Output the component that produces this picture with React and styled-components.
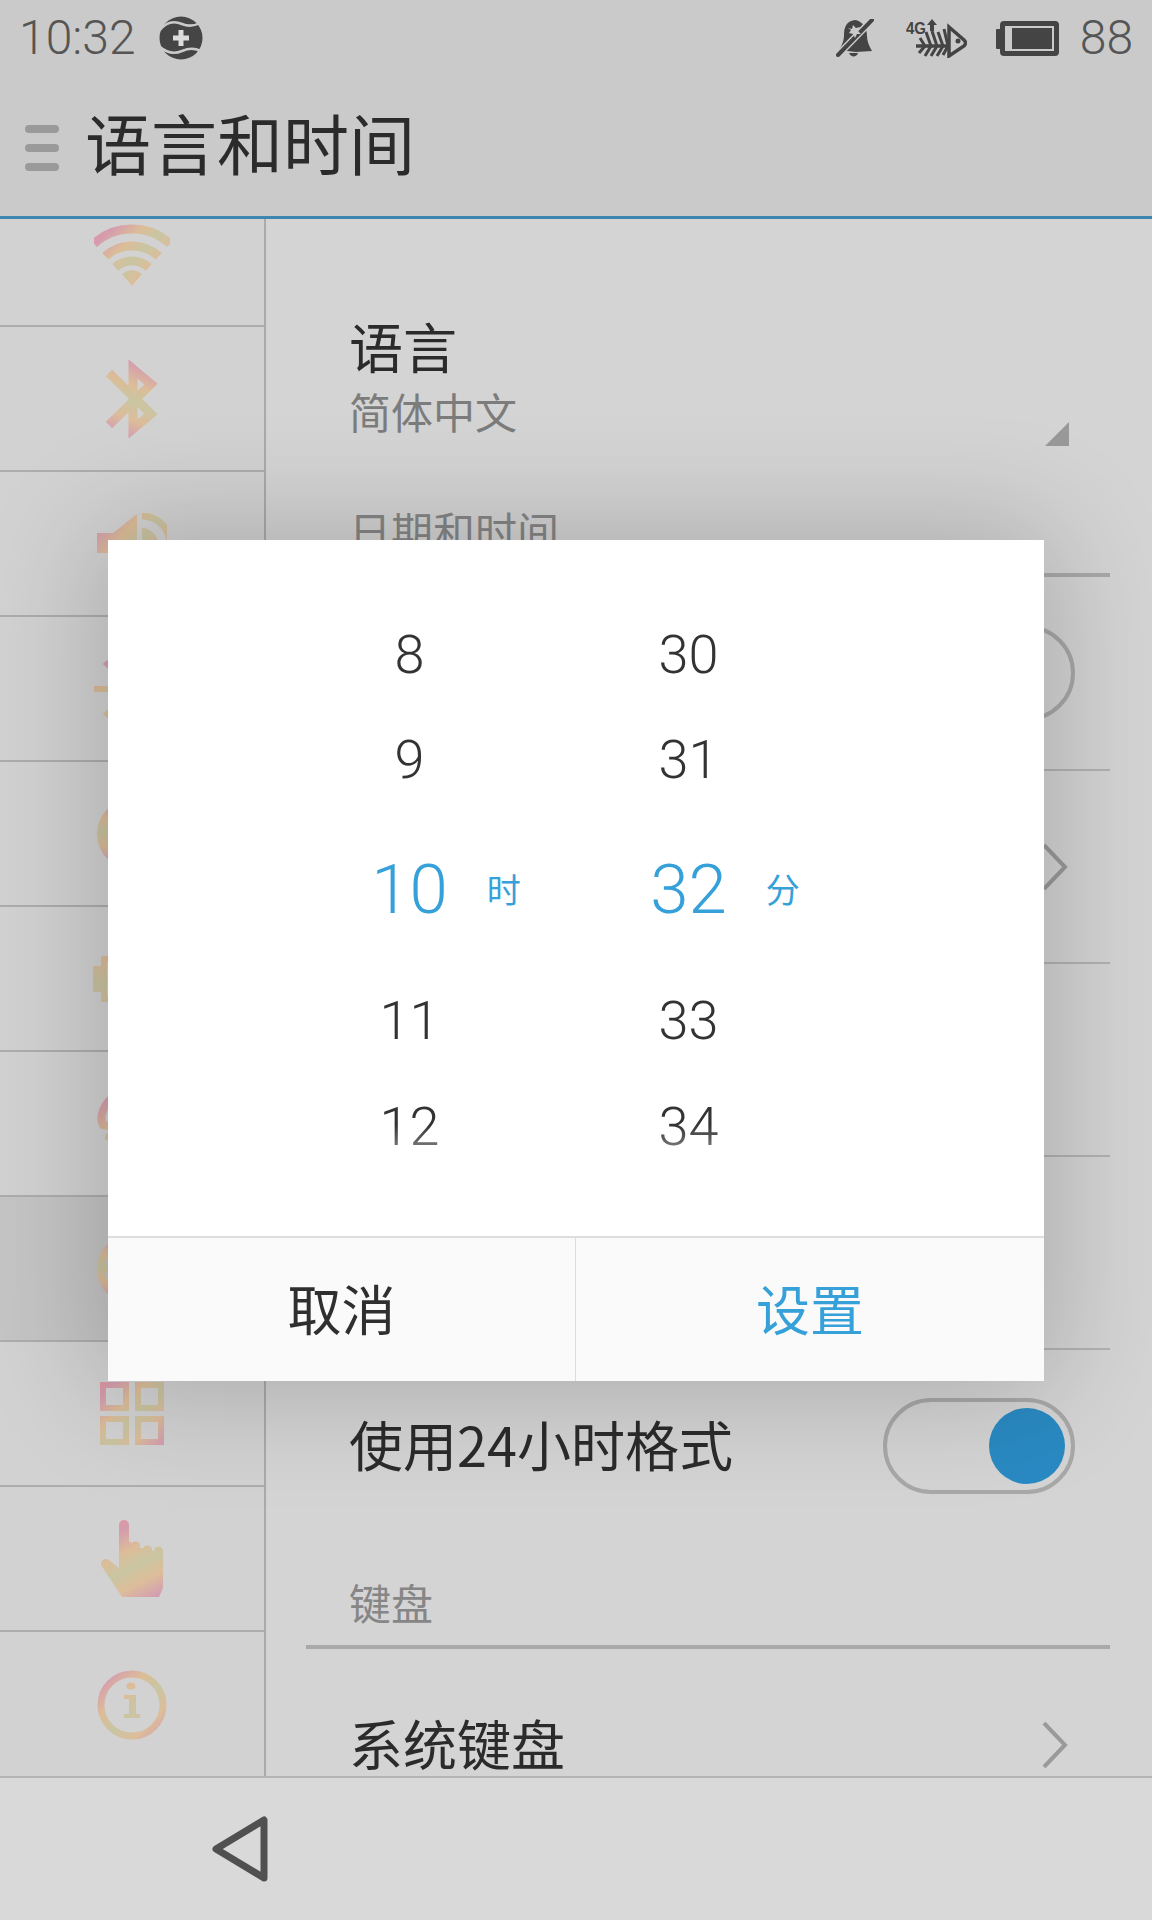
import React from "react";
import styled, { createGlobalStyle } from "styled-components";

const CJK = `"Noto Sans CJK SC", "Noto Sans", sans-serif`;
const NUM = `Roboto, "Noto Sans CJK SC", sans-serif`;

const Global = createGlobalStyle`
  html, body { margin: 0; padding: 0; background: #d4d4d4; }
  * { box-sizing: border-box; }
`;

const Screen = styled.div`
  position: relative;
  width: 1152px;
  height: 1920px;
  overflow: hidden;
  display: flex;
  flex-direction: column;
  font-family: ${CJK};
  background: #d4d4d4;
`;

const StatusBar = styled.div`
  height: 80px;
  flex: none;
  background: #cacaca;
  display: flex;
  align-items: center;
  justify-content: space-between;
  padding: 0 19px 4px 19px;
`;
const StatusGroup = styled.div`
  display: flex;
  align-items: center;
`;
const StatusText = styled.span`
  font: 300 48px/1 ${NUM};
  color: #555;
  margin: ${(p) => p.$margin || 0};
`;
const StatusGlyph = styled.svg`
  flex: none;
  display: block;
  margin: ${(p) => p.$margin || 0};
`;

const Header = styled.header`
  height: 139px;
  flex: none;
  background: #cacaca;
  border-bottom: 3px solid #3c86b0;
  display: flex;
  align-items: center;
  padding-left: 25px;
  gap: 26px;
`;
const Burger = styled.div`
  width: 34px;
  display: flex;
  flex-direction: column;
  gap: 11px;
  & > i {
    display: block;
    height: 8px;
    border-radius: 4px;
    background: #9a9a9a;
  }
`;
const Title = styled.h1`
  margin: 0 0 14px;
  font: 400 66px/1 ${CJK};
  color: #2b2b2b;
`;

const Body = styled.div`
  flex: 1;
  min-height: 0;
  display: flex;
  overflow: hidden;
`;
const Sidebar = styled.aside`
  width: 266px;
  flex: none;
  background: #d2d2d2;
  border-right: 2px solid #aaa;
  display: flex;
  flex-direction: column;
`;
const SideRow = styled.div`
  flex: none;
  height: ${(p) => p.$h || 145}px;
  display: flex;
  align-items: ${(p) => (p.$top ? "flex-start" : "center")};
  justify-content: center;
  border-bottom: 2px solid #adadad;
  background: ${(p) => (p.$active ? "rgba(0,0,0,0.06)" : "transparent")};
  padding-top: ${(p) => p.$pad || 0}px;
  &:last-child { border-bottom: none; }
`;

const Main = styled.main`
  flex: 1;
  min-width: 0;
  padding: 0 42px 0 40px;
  overflow: hidden;
`;
const LangRow = styled.div`
  height: 252px;
  display: flex;
  align-items: flex-start;
  justify-content: space-between;
  padding: 100px 41px 0 43px;
`;
const LangText = styled.div`
  display: flex;
  flex-direction: column;
`;
const ItemTitle = styled.div`
  font: 400 54px/1 ${CJK};
  color: #2b2b2b;
  white-space: nowrap;
`;
const ItemSub = styled.div`
  font: 400 42px/1 ${CJK};
  color: #7c7c7c;
  margin-top: 17px;
`;
const Corner = styled.div`
  width: 24px;
  height: 24px;
  margin-top: 103px;
  background: #999;
  clip-path: polygon(100% 0, 100% 100%, 0 100%);
`;
const Section = styled.div`
  height: 106px;
  flex: none;
  border-bottom: 4px solid #a9a9a9;
  padding: 38px 0 0 43px;
  font: 400 42px/1 ${CJK};
  color: #868686;
`;
const Row = styled.div`
  height: ${(p) => p.$h || 193}px;
  display: flex;
  align-items: center;
  justify-content: flex-end;
  padding: 0 ${(p) => p.$right || 35}px ${(p) => (p.$plain ? 2 : 0)}px 43px;
  border-bottom: ${(p) => (p.$plain ? "none" : "2px solid #b2b2b2")};
`;
const RowLabel = styled(ItemTitle)`
  margin: 0 auto ${(p) => p.$lift || 0}px 0;
`;
const Toggle = styled.div`
  width: 192px;
  height: 96px;
  flex: none;
  border-radius: 48px;
  border: 4px solid #a8a8a8;
  display: flex;
  align-items: center;
  justify-content: ${(p) => (p.$on ? "flex-end" : "flex-start")};
  padding: 0 6px;
  & > i {
    width: 76px;
    height: 76px;
    border-radius: 50%;
    background: ${(p) => (p.$on ? "#2a8ac3" : "transparent")};
  }
`;
const Chevron = styled.svg`
  flex: none;
  display: block;
`;

const NavBar = styled.nav`
  height: 144px;
  flex: none;
  background: #d9d9d9;
  border-top: 2px solid #b4b4b4;
  display: flex;
  align-items: center;
  padding-left: 211px;
`;

const Dialog = styled.div`
  position: absolute;
  left: 108px;
  top: 540px;
  width: 936px;
  height: 841px;
  background: #fff;
  box-shadow: 0 0 110px 10px rgba(0, 0, 0, 0.2);
  display: flex;
  flex-direction: column;
`;
const Picker = styled.div`
  position: relative;
  height: 696px;
  flex: none;
  display: flex;
  padding: 63px 0 0 162px;
  &::before, &::after {
    content: "";
    position: absolute;
    left: 0;
    right: 0;
    pointer-events: none;
  }
  &::before {
    top: 0;
    height: 120px;
    background: linear-gradient(#fff 45%, rgba(255,255,255,0));
  }
  &::after {
    bottom: 0;
    height: 111px;
    background: linear-gradient(rgba(255,255,255,0), #fff 60%);
  }
`;
const Wheel = styled.div`
  width: 279px;
  display: flex;
  flex-direction: column;
  align-items: center;
`;
const Cell = styled.div`
  height: ${(p) => p.$h}px;
  display: flex;
  align-items: center;
  justify-content: center;
  font: 300 ${(p) => (p.$sel ? 69 : 54)}px/1 ${NUM};
  color: ${(p) => (p.$sel ? "#36a0d9" : "#333")};
`;
const Num = styled.span`
  position: relative;
`;
const Unit = styled.span`
  position: absolute;
  left: calc(100% + 39px);
  top: 50%;
  transform: translateY(-50%);
  font: 400 34px/1 ${CJK};
  color: #36a0d9;
  white-space: nowrap;
`;
const Footer = styled.div`
  flex: 1;
  display: grid;
  grid-template-columns: 467px 1fr;
  background: #fafafa;
  border-top: 2px solid #dedede;
`;
const FootBtn = styled.div`
  display: flex;
  align-items: center;
  justify-content: center;
  padding-bottom: 4px;
  font: 400 54px/1 ${CJK};
  color: ${(p) => (p.$primary ? "#36a0d9" : "#2f2f2f")};
  border-left: ${(p) => (p.$primary ? "1px solid #dcdcdc" : "none")};
`;

/* pastel fill shared by the sidebar icons */
const Pastel = ({ id, w, h, dir = [0, 0, 1, 1], children }) => (
  <svg width={w} height={h} viewBox={`0 0 ${w} ${h}`} style={{ display: "block", flex: "none" }}>
    <defs>
      <linearGradient id={id} gradientUnits="userSpaceOnUse" x1={dir[0] * w} y1={dir[1] * h} x2={dir[2] * w} y2={dir[3] * h}>
        <stop offset="0" stopColor="#dc98a0" />
        <stop offset="0.12" stopColor="#d59cae" />
        <stop offset="0.36" stopColor="#dcbd98" />
        <stop offset="0.55" stopColor="#c9c5a2" />
        <stop offset="0.75" stopColor="#ddbd9a" />
        <stop offset="1" stopColor="#d29ab4" />
      </linearGradient>
    </defs>
    <g fill={`url(#${id})`} stroke={`url(#${id})`} strokeWidth="0">{children}</g>
  </svg>
);

const band = (r, deg = 42, cx = 38, cy = 62) => {
  const a = (deg * Math.PI) / 180;
  const dx = r * Math.sin(a);
  const dy = r * Math.cos(a);
  return `M${cx - dx} ${cy - dy}A${r} ${r} 0 0 1 ${cx + dx} ${cy - dy}`;
};

const WifiIcon = () => (
  <Pastel id="g-wifi" w={76} h={62} dir={[0.1, 0, 0.9, 1]}>
    <g fill="none" strokeWidth="9">
      <path d={band(57)} />
      <path d={band(40)} />
      <path d={band(25)} />
    </g>
    <path d="M38 62L28 50A15 15 0 0 1 48 50Z" />
  </Pastel>
);
const BluetoothIcon = () => (
  <Pastel id="g-bt" w={54} h={78} dir={[0.9, 0, 0.3, 1]}>
    <path fill="none" strokeWidth="9" d="M4 13L46 54L28 69V9L46 24L4 65" />
  </Pastel>
);
const SoundIcon = () => (
  <Pastel id="g-snd" w={70} h={62}>
    <path d="M0 20H16L40 1V61L16 40H0Z" />
    <path fill="none" strokeWidth="7" d="M45 3A28 28 0 0 1 45 59" />
    <path d="M45 15A16 16 0 0 1 45 47Z" />
  </Pastel>
);
const SunIcon = () => (
  <Pastel id="g-sun" w={76} h={76} dir={[0, 0.1, 0.6, 0.9]}>
    <g fill="none" strokeWidth="6">
      <path d="M0 38H14M62 38H76M38 0V14M38 62V76M11 11L20 20M65 11L56 20M11 65L20 56M65 65L56 56" />
    </g>
    <circle cx="38" cy="38" r="16" />
  </Pastel>
);
const DiscIcon = () => (
  <Pastel id="g-disc" w={70} h={70} dir={[0.6, 0, 0.4, 1]}>
    <circle cx="35" cy="35" r="35" />
  </Pastel>
);
const BatteryIcon = () => (
  <Pastel id="g-bat" w={78} h={46} dir={[0, -1, 0, 2]}>
    <rect x="0" y="10" width="11" height="26" />
    <rect x="11" y="3" width="64" height="40" fill="none" strokeWidth="6" />
  </Pastel>
);
const SwirlIcon = () => (
  <Pastel id="g-swirl" w={70} h={70}>
    <g fill="none" strokeWidth="8" strokeLinecap="round">
      <path d="M20 5C6 14 2 28 6 36C18 38 30 40 36 32" />
      <path d="M12 48C24 54 36 52 48 46" />
      <path d="M22 64H46" />
    </g>
  </Pastel>
);
const GlobeIcon = () => (
  <Pastel id="g-globe" w={70} h={70} dir={[0.6, 0, 0.4, 1]}>
    <circle cx="35" cy="35" r="31" fill="none" strokeWidth="8" />
    <rect x="6" y="31" width="58" height="7" />
  </Pastel>
);
const GridIcon = () => (
  <Pastel id="g-grid" w={64} h={63}>
    <g fill="none" strokeWidth="6">
      <rect x="3" y="3" width="23" height="23" />
      <rect x="38" y="3" width="23" height="23" />
      <rect x="3" y="37" width="23" height="23" />
      <rect x="38" y="37" width="23" height="23" />
    </g>
  </Pastel>
);
const HandIcon = () => (
  <Pastel id="g-hand" w={62} h={77} dir={[0.3, 0, 0.95, 1]}>
    <path d="M18 5A5 5 0 0 1 28 5V22H30V24A5 5 0 0 1 39 24V28H42A5 5 0 0 1 51 28V31H53A4.5 4.5 0 0 1 62 31V68L58 77H21L2 48A4.5 4.5 0 0 1 8 40L18 48Z" />
  </Pastel>
);
const InfoIcon = () => (
  <Pastel id="g-info" w={70} h={72}>
    <circle cx="35" cy="36" r="31" fill="none" strokeWidth="7" />
    <ellipse cx="34" cy="17" rx="4.5" ry="3.5" />
    <path d="M27 26H39V45H43V49H27V45H32V30H27Z" />
  </Pastel>
);

const LogoMark = () => (
  <StatusGlyph width="44" height="44" viewBox="0 0 44 44" $margin="0 0 0 23px">
    <circle cx="22" cy="22" r="21.5" fill="#454545" />
    <path d="M1 14C8 5 16 5 23 8C30 11 36 10 43 6" fill="none" stroke="#cacaca" strokeWidth="2.5" />
    <path d="M1 31C8 37 16 38 23 35C30 32 37 32 43 36" fill="none" stroke="#cacaca" strokeWidth="2.5" />
    <circle cx="22" cy="22" r="11" fill="#454545" />
    <path d="M19.5 14H24.5V19.5H30V24.5H24.5V30H19.5V24.5H14V19.5H19.5Z" fill="#dcdcdc" />
  </StatusGlyph>
);
const BellOff = () => (
  <StatusGlyph width="38" height="38" viewBox="0 0 38 38" $margin="0 32px 0 0">
    <path d="M19 1C10 2 8 9 8 16C8 23 5 28 3 31L20 33L36 32C33 27 31 22 31 17C31 8 26 2 19 1Z" fill="#444" />
    <path d="M13 34C15 39 21 38 22 34Z" fill="#444" />
    <path d="M34 3L2 36" stroke="#cacaca" strokeWidth="7" />
    <path d="M36 1L2 36" stroke="#444" strokeWidth="4" strokeLinecap="round" />
    <path d="M12 9L16 10L17 6L20 9L24 8L22 12L25 15L21 15L19 19L17 15L13 14L15 11Z" fill="#cacaca" />
  </StatusGlyph>
);
const FishSignal = () => (
  <StatusGlyph width="61" height="40" viewBox="0 0 61 40" $margin="0 29px 0 0">
    <text x="0" y="16" fontFamily="Liberation Sans, sans-serif" fontWeight="700" fontSize="17" textLength="20" lengthAdjust="spacingAndGlyphs" fill="#444">4G</text>
    <path d="M26 1L21 7H24V13H28V7H31Z" fill="#444" />
    <path d="M10 28H42" stroke="#444" strokeWidth="3.5" />
    <path d="M20 14L25 28L19 38M26 13L31 28L25 38M32 14L37 28L31 38M38 11L42 28L37 37M14 20L19 28L13 35" fill="none" stroke="#444" strokeWidth="3" />
    <path d="M43 9L58 22Q61 25 58 28L43 38Z" fill="none" stroke="#444" strokeWidth="3.5" />
    <circle cx="52" cy="23" r="2.5" fill="#444" />
  </StatusGlyph>
);
const BatteryStatus = () => (
  <StatusGlyph width="63" height="35" viewBox="0 0 63 35" $margin="0 21px 0 0">
    <rect x="0" y="8" width="5" height="20" rx="1" fill="#444" />
    <rect x="6.5" y="2.5" width="54" height="30" rx="1.5" fill="none" stroke="#444" strokeWidth="5" />
    <rect x="16" y="7" width="40" height="21" fill="#444" />
  </StatusGlyph>
);

const ChevronIcon = () => (
  <Chevron width="26" height="46" viewBox="0 0 26 46">
    <path d="M2 1L23 23L2 45" fill="none" stroke="#9a9a9a" strokeWidth="4" />
  </Chevron>
);

const hours = [["8", 104], ["9", 106], ["10", 152, "时"], ["11", 111], ["12", 102]];
const minutes = [["30", 104], ["31", 106], ["32", 152, "分"], ["33", 111], ["34", 102]];

const Column = ({ items }) => (
  <Wheel>
    {items.map(([value, h, unit]) => (
      <Cell key={value} $h={h} $sel={!!unit}>
        <Num>
          {value}
          {unit && <Unit>{unit}</Unit>}
        </Num>
      </Cell>
    ))}
  </Wheel>
);

export default function App() {
  return (
    <Screen>
      <Global />
      <StatusBar>
        <StatusGroup>
          <StatusText>10:32</StatusText>
          <LogoMark />
        </StatusGroup>
        <StatusGroup>
          <BellOff />
          <FishSignal />
          <BatteryStatus />
          <StatusText>88</StatusText>
        </StatusGroup>
      </StatusBar>
      <Header>
        <Burger><i /><i /><i /></Burger>
        <Title>语言和时间</Title>
      </Header>
      <Body>
        <Sidebar>
          <SideRow $h={108} $top $pad={5}><WifiIcon /></SideRow>
          <SideRow><BluetoothIcon /></SideRow>
          <SideRow><SoundIcon /></SideRow>
          <SideRow><SunIcon /></SideRow>
          <SideRow><DiscIcon /></SideRow>
          <SideRow><BatteryIcon /></SideRow>
          <SideRow><SwirlIcon /></SideRow>
          <SideRow $active><GlobeIcon /></SideRow>
          <SideRow><GridIcon /></SideRow>
          <SideRow><HandIcon /></SideRow>
          <SideRow><InfoIcon /></SideRow>
        </Sidebar>
        <Main>
          <LangRow>
            <LangText>
              <ItemTitle>语言</ItemTitle>
              <ItemSub>简体中文</ItemSub>
            </LangText>
            <Corner />
          </LangRow>
          <Section>日期和时间</Section>
          <Row $h={194}><Toggle /></Row>
          <Row $right={42}><ChevronIcon /></Row>
          <Row />
          <Row />
          <Row $plain><RowLabel $lift={4}>使用24小时格式</RowLabel><Toggle $on><i /></Toggle></Row>
          <Section>键盘</Section>
          <Row $right={42}><RowLabel $lift={3}>系统键盘</RowLabel><ChevronIcon /></Row>
        </Main>
      </Body>
      <NavBar>
        <svg width="58" height="66" viewBox="0 0 58 66" style={{ display: "block" }}>
          <path d="M53 4V62L5 33Z" fill="none" stroke="#505050" strokeWidth="7" strokeLinejoin="round" />
        </svg>
      </NavBar>
      <Dialog>
        <Picker>
          <Column items={hours} />
          <Column items={minutes} />
        </Picker>
        <Footer>
          <FootBtn>取消</FootBtn>
          <FootBtn $primary>设置</FootBtn>
        </Footer>
      </Dialog>
    </Screen>
  );
}
